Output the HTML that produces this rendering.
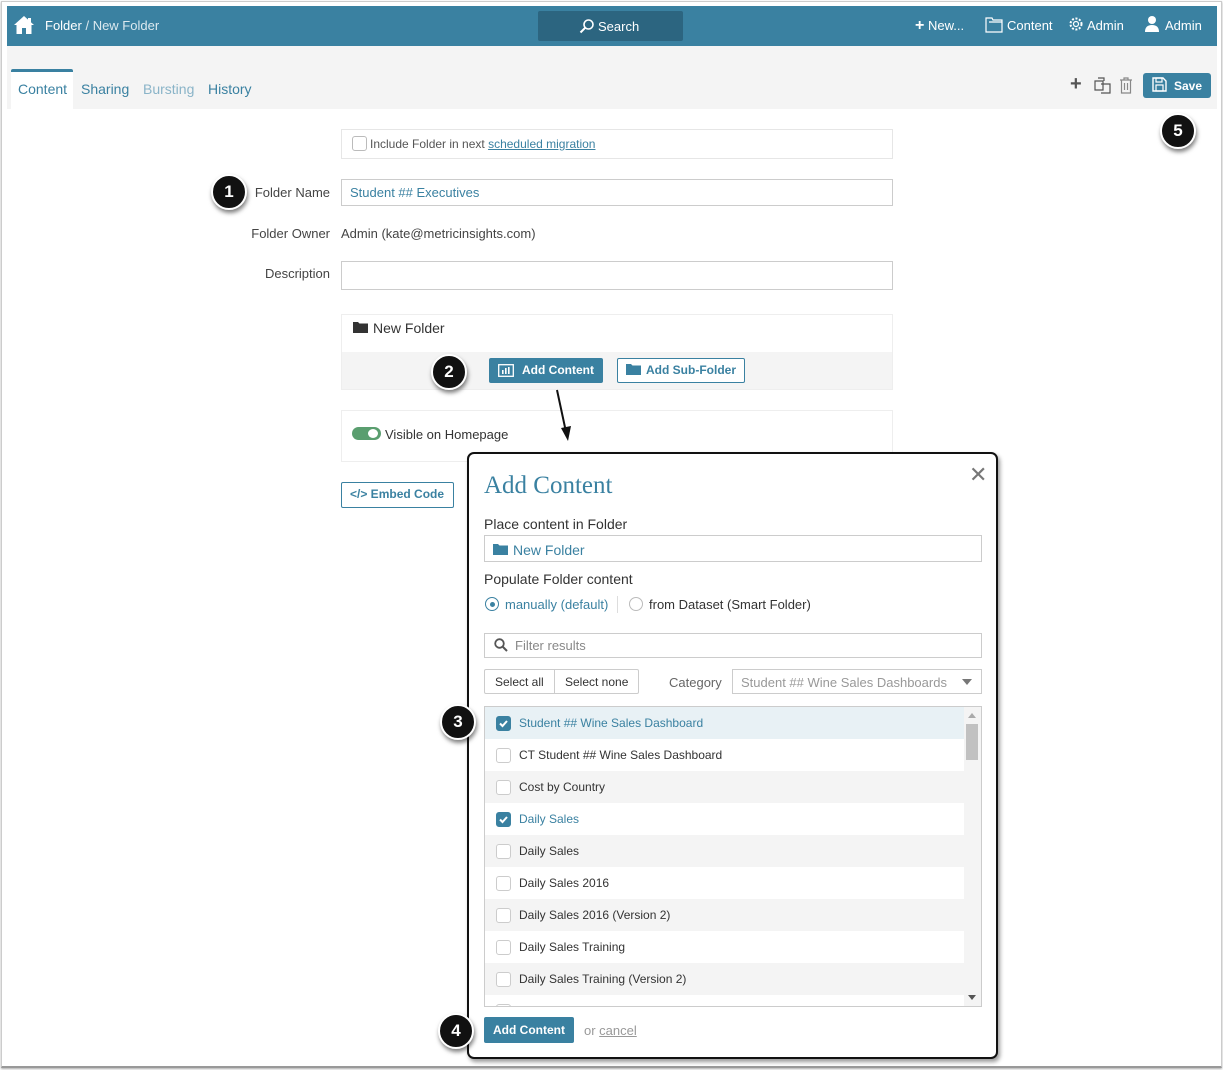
<!DOCTYPE html>
<html><head><meta charset="utf-8">
<style>
*{box-sizing:border-box;margin:0;padding:0}
body{width:1223px;height:1070px;position:relative;background:#fff;font-family:"Liberation Sans",sans-serif;font-size:13px;color:#444;overflow:hidden}
.a{position:absolute}
.frame{left:1px;top:1px;width:1221px;height:1067px;border:1px solid #ccc;border-bottom:2px solid #999;box-shadow:0 1px 2px #aaa}
.hdr{left:7px;top:6px;width:1210px;height:40px;background:#3a81a1;color:#fff}
.tabs{left:7px;top:46px;width:1210px;height:63px;background:#f4f4f4}
.inp{border:1px solid #ccc;background:#fff}
.lbl{text-align:right;width:130px;color:#444}
.circ{width:36px;height:36px;border-radius:50%;background:#111;color:#fff;font-weight:bold;font-size:17px;text-align:center;line-height:32px;border:2px solid #fff;box-shadow:1px 3px 4px rgba(0,0,0,.5)}
.btn{background:#3a81a1;color:#fff;font-weight:bold;border-radius:2px}
.row{position:absolute;left:0;width:479px;height:32px;line-height:32px;padding-left:34px;font-size:12px;color:#333}
.row .cb{position:absolute;left:11px;top:9px;width:15px;height:15px;border:1px solid #ccc;border-radius:3px;background:#fff}
.row.on{color:#3a81a1}
.row.on .cb{background:#3a81a1;border-color:#3a81a1}
</style></head><body>
<div class="a frame"></div>
<div class="a hdr">
 <svg class="a" style="left:6px;top:9px" width="22" height="20" viewBox="0 0 22 20"><path d="M11 1 L1 10 L3.5 10 L3.5 19 L9 19 L9 13 L13 13 L13 19 L18.5 19 L18.5 10 L21 10 Z" fill="#fff"/><rect x="15" y="3" width="3" height="5" fill="#fff"/></svg>
 <div class="a" style="left:38px;top:12px;font-size:13px">Folder <span style="color:#dbe9ef">/ New Folder</span></div>
 <div class="a" style="left:531px;top:5px;width:145px;height:30px;background:#2c6580;border-radius:2px"></div>
 <svg class="a" style="left:572px;top:12px" width="16" height="16" viewBox="0 0 16 16"><circle cx="9.5" cy="6.5" r="4.5" stroke="#fff" stroke-width="1.6" fill="none"/><path d="M6.3 9.7 L1.5 14.5" stroke="#fff" stroke-width="2"/></svg>
 <div class="a" style="left:591px;top:13px;font-size:13px">Search</div>
 <div class="a" style="left:908px;top:11px;font-size:13px"><b style="font-size:16px">+</b> New...</div>
 <svg class="a" style="left:978px;top:11px" width="18" height="16" viewBox="0 0 18 16"><path d="M1 1 H7 L8 3 H17 V15 H1 Z M4 5 H17" stroke="#fff" stroke-width="1.2" fill="none"/></svg>
 <div class="a" style="left:1000px;top:12px">Content</div>
 <svg class="a" style="left:1061px;top:10px" width="16" height="16" viewBox="0 0 16 16"><circle cx="8" cy="8" r="2.5" stroke="#fff" fill="none" stroke-width="1.2"/><circle cx="8" cy="8" r="5.5" stroke="#fff" fill="none" stroke-width="2" stroke-dasharray="2 1.6"/></svg>
 <div class="a" style="left:1080px;top:12px">Admin</div>
 <svg class="a" style="left:1137px;top:9px" width="16" height="18" viewBox="0 0 16 18"><circle cx="8" cy="5" r="4" fill="#fff"/><path d="M1 17 Q1 10 8 10 Q15 10 15 17 Z" fill="#fff"/></svg>
 <div class="a" style="left:1158px;top:12px">Admin</div>
</div>
<div class="a tabs">
 <div class="a" style="left:4px;top:23px;width:62px;height:40px;background:#fff;border-top:3px solid #3a81a1;border-radius:2px 2px 0 0"></div>
 <div class="a" style="left:11px;top:35px;font-size:14px;color:#3a81a1">Content</div>
 <div class="a" style="left:74px;top:35px;font-size:14px;color:#3a81a1">Sharing</div>
 <div class="a" style="left:136px;top:35px;font-size:14px;color:#8ab4c8">Bursting</div>
 <div class="a" style="left:201px;top:35px;font-size:14px;color:#3a81a1">History</div>
 <div class="a" style="left:1063px;top:27px;font-size:20px;font-weight:bold;color:#555">+</div>
 <svg class="a" style="left:1087px;top:31px" width="17" height="17" viewBox="0 0 17 17"><path d="M4 1 H10 V4 M1 4 H9 V13 H1 Z M7 7 H16 V16 H7" stroke="#555" stroke-width="1.2" fill="none"/></svg>
 <svg class="a" style="left:1112px;top:31px" width="14" height="17" viewBox="0 0 14 17"><path d="M1 3 H13 M5 3 V1 H9 V3 M2.5 3 V16 H11.5 V3 M5.5 6 V13 M8.5 6 V13" stroke="#888" stroke-width="1.2" fill="none"/></svg>
 <div class="a btn" style="left:1136px;top:27px;width:68px;height:25px;border-radius:3px"></div>
 <svg class="a" style="left:1145px;top:31px" width="15" height="15" viewBox="0 0 15 15"><path d="M1 1 H11 L14 4 V14 H1 Z" stroke="#fff" stroke-width="1.4" fill="none"/><rect x="4" y="1" width="6" height="4" stroke="#fff" stroke-width="1.2" fill="none"/><rect x="4" y="8" width="7" height="6" stroke="#fff" stroke-width="1.2" fill="none"/></svg>
 <div class="a" style="left:1167px;top:33px;color:#fff;font-weight:bold;font-size:12px">Save</div>
</div>

<div class="a inp" style="left:341px;top:129px;width:552px;height:30px;border-color:#e6e6e6"></div>
<div class="a" style="left:352px;top:136px;width:15px;height:15px;border:1px solid #bbb;border-radius:3px"></div>
<div class="a" style="left:370px;top:137px;font-size:12px;color:#555">Include Folder in next <span style="color:#3a81a1;text-decoration:underline">scheduled migration</span></div>

<div class="a lbl" style="left:200px;top:185px">Folder Name</div>
<div class="a inp" style="left:341px;top:179px;width:552px;height:27px"></div>
<div class="a" style="left:350px;top:185px;color:#3a81a1">Student ## Executives</div>
<div class="a lbl" style="left:200px;top:226px">Folder Owner</div>
<div class="a" style="left:341px;top:226px;color:#444">Admin (kate@metricinsights.com)</div>
<div class="a lbl" style="left:200px;top:266px">Description</div>
<div class="a inp" style="left:341px;top:261px;width:552px;height:29px"></div>

<div class="a" style="left:341px;top:314px;width:552px;height:76px;border:1px solid #eee"></div>
<div class="a" style="left:342px;top:352px;width:550px;height:37px;background:#f4f4f4"></div>
<svg class="a" style="left:353px;top:321px" width="15" height="12" viewBox="0 0 15 12"><path d="M0 1 H5 L6.5 2.5 H15 V12 H0 Z" fill="#333"/></svg>
<div class="a" style="left:373px;top:320px;font-size:14px;color:#333">New Folder</div>
<div class="a btn" style="left:489px;top:358px;width:114px;height:25px"></div>
<svg class="a" style="left:498px;top:364px" width="16" height="13" viewBox="0 0 16 13"><rect x="0.7" y="0.7" width="14.6" height="11.6" stroke="#fff" stroke-width="1.3" fill="none"/><rect x="4" y="6" width="1.6" height="4" fill="#fff"/><rect x="7" y="4" width="1.6" height="6" fill="#fff"/><rect x="10" y="3" width="1.6" height="7" fill="#fff"/></svg>
<div class="a" style="left:522px;top:363px;color:#fff;font-weight:bold;font-size:12px">Add Content</div>
<div class="a" style="left:617px;top:358px;width:128px;height:25px;border:1px solid #3a81a1;background:#fff;border-radius:2px"></div>
<svg class="a" style="left:626px;top:363px" width="15" height="12" viewBox="0 0 15 12"><path d="M0 1 H5 L6.5 2.5 H15 V12 H0 Z" fill="#3a81a1"/></svg>
<div class="a" style="left:646px;top:363px;color:#3a81a1;font-weight:bold;font-size:12px">Add Sub-Folder</div>

<div class="a" style="left:341px;top:410px;width:552px;height:52px;border:1px solid #eee"></div>
<div class="a" style="left:352px;top:427px;width:29px;height:13px;border-radius:7px;background:#5a9e6f"></div>
<div class="a" style="left:368px;top:429px;width:10px;height:9px;border-radius:50%;background:#fff"></div>
<div class="a" style="left:385px;top:427px;color:#333">Visible on Homepage</div>
<div class="a" style="left:341px;top:482px;width:113px;height:26px;border:1px solid #3a81a1;border-radius:2px"></div>
<div class="a" style="left:350px;top:487px;color:#3a81a1;font-weight:bold;font-size:12px">&lt;/&gt; Embed Code</div>

<svg class="a" style="left:0;top:0" width="1223" height="1070"><path d="M557 390 L566 432" stroke="#111" stroke-width="2"/><path d="M561 428 L568 441 L571 426 Z" fill="#111"/></svg>

<!-- modal -->
<div class="a" style="left:467px;top:452px;width:531px;height:607px;border:2px solid #111;border-radius:7px;background:#fff;box-shadow:2px 3px 4px rgba(0,0,0,.4)"></div>
<div class="a" style="left:969px;top:462px;font-size:22px;color:#777">✕</div>
<div class="a" style="left:484px;top:472px;font-family:'Liberation Serif',serif;font-size:25px;color:#3a81a1">Add Content</div>
<div class="a" style="left:484px;top:516px;font-size:14px;color:#333">Place content in Folder</div>
<div class="a inp" style="left:484px;top:535px;width:498px;height:27px"></div>
<svg class="a" style="left:493px;top:543px" width="15" height="12" viewBox="0 0 15 12"><path d="M0 1 H5 L6.5 2.5 H15 V12 H0 Z" fill="#3a81a1"/></svg>
<div class="a" style="left:513px;top:542px;font-size:14px;color:#3a81a1">New Folder</div>
<div class="a" style="left:484px;top:571px;font-size:14px;color:#333">Populate Folder content</div>
<div class="a" style="left:485px;top:597px;width:14px;height:14px;border:1.5px solid #3a81a1;border-radius:50%"></div>
<div class="a" style="left:489.5px;top:601.5px;width:5px;height:5px;background:#3a81a1;border-radius:50%"></div>
<div class="a" style="left:505px;top:597px;color:#3a81a1">manually (default)</div>
<div class="a" style="left:617px;top:596px;width:1px;height:17px;background:#ddd"></div>
<div class="a" style="left:629px;top:597px;width:14px;height:14px;border:1px solid #bbb;border-radius:50%"></div>
<div class="a" style="left:649px;top:597px;color:#333">from Dataset (Smart Folder)</div>
<div class="a inp" style="left:484px;top:633px;width:498px;height:25px"></div>
<svg class="a" style="left:494px;top:638px" width="14" height="14" viewBox="0 0 14 14"><circle cx="5.5" cy="5.5" r="4.3" stroke="#555" stroke-width="1.8" fill="none"/><path d="M8.5 8.5 L13 13" stroke="#555" stroke-width="2"/></svg>
<div class="a" style="left:515px;top:638px;color:#888">Filter results</div>
<div class="a inp" style="left:484px;top:669px;width:155px;height:25px;border-radius:2px"></div>
<div class="a" style="left:554px;top:669px;width:1px;height:25px;background:#ccc"></div>
<div class="a" style="left:495px;top:675px;font-size:12px;color:#333">Select all</div>
<div class="a" style="left:565px;top:675px;font-size:12px;color:#333">Select none</div>
<div class="a" style="left:669px;top:675px;color:#666">Category</div>
<div class="a inp" style="left:732px;top:669px;width:250px;height:25px"></div>
<div class="a" style="left:741px;top:675px;color:#999">Student ## Wine Sales Dashboards</div>
<div class="a" style="left:962px;top:679px;width:0;height:0;border-left:5px solid transparent;border-right:5px solid transparent;border-top:6px solid #777"></div>

<div class="a" style="left:484px;top:706px;width:498px;height:301px;border:1px solid #ccc;overflow:hidden">
 <div class="row on" style="top:0;background:#e8f1f5"><span class="cb"><svg width="13" height="13" viewBox="0 0 13 13" style="position:absolute;left:0;top:0"><path d="M3 6.5 L5.5 9 L10 4" stroke="#fff" stroke-width="2" fill="none"/></svg></span>Student ## Wine Sales Dashboard</div>
 <div class="row" style="top:32px"><span class="cb"></span>CT Student ## Wine Sales Dashboard</div>
 <div class="row" style="top:64px;background:#f4f4f4"><span class="cb"></span>Cost by Country</div>
 <div class="row on" style="top:96px"><span class="cb"><svg width="13" height="13" viewBox="0 0 13 13" style="position:absolute;left:0;top:0"><path d="M3 6.5 L5.5 9 L10 4" stroke="#fff" stroke-width="2" fill="none"/></svg></span>Daily Sales</div>
 <div class="row" style="top:128px;background:#f4f4f4"><span class="cb"></span>Daily Sales</div>
 <div class="row" style="top:160px"><span class="cb"></span>Daily Sales 2016</div>
 <div class="row" style="top:192px;background:#f4f4f4"><span class="cb"></span>Daily Sales 2016 (Version 2)</div>
 <div class="row" style="top:224px"><span class="cb"></span>Daily Sales Training</div>
 <div class="row" style="top:256px;background:#f4f4f4"><span class="cb"></span>Daily Sales Training (Version 2)</div>
 <div class="row" style="top:288px"><span class="cb"></span>Daily Sales with Date Filter</div>
 <div class="a" style="left:479px;top:0;width:17px;height:299px;background:#f4f4f4"></div>
 <div class="a" style="left:481px;top:17px;width:12px;height:36px;background:#c1c1c1"></div>
 <div class="a" style="left:483px;top:6px;border-left:4px solid transparent;border-right:4px solid transparent;border-bottom:5px solid #aaa"></div>
 <div class="a" style="left:483px;top:288px;border-left:4px solid transparent;border-right:4px solid transparent;border-top:5px solid #555"></div>
</div>
<div class="a btn" style="left:484px;top:1017px;width:90px;height:26px"></div>
<div class="a" style="left:493px;top:1023px;color:#fff;font-weight:bold;font-size:12px">Add Content</div>
<div class="a" style="left:584px;top:1023px;color:#999">or <span style="text-decoration:underline">cancel</span></div>

<div class="a circ" style="left:211px;top:174px">1</div>
<div class="a circ" style="left:431px;top:354px">2</div>
<div class="a circ" style="left:440px;top:704px">3</div>
<div class="a circ" style="left:438px;top:1013px">4</div>
<div class="a circ" style="left:1160px;top:113px">5</div>
</body></html>
